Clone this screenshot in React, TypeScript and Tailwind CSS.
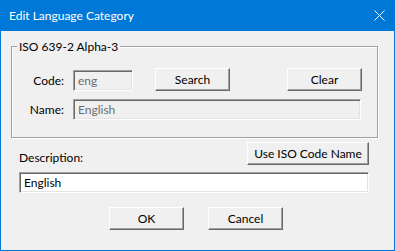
import React from "react";

const font = { fontFamily: 'Lato, "Noto Sans", sans-serif' };

function Btn({ children, className = "" }: { children: React.ReactNode; className?: string }) {
  return (
    <div
      className={
        "h-[23px] flex items-center justify-center pt-[1px] bg-[#f0f0f0] border border-t-white border-l-white border-r-[#696969] border-b-[#696969] shadow-[inset_-1px_-1px_0_#a0a0a0] text-black text-[12px] leading-none " +
        className
      }
    >
      {children}
    </div>
  );
}

function Field({ children, className = "", disabled = false }: { children: React.ReactNode; className?: string; disabled?: boolean }) {
  return (
    <div
      className={
        "h-[21px] flex items-center pl-[4px] pt-[1px] border border-t-[#a0a0a0] border-l-[#a0a0a0] border-r-white border-b-white shadow-[inset_1px_1px_0_#696969,inset_-1px_-1px_0_#e3e3e3] text-[12px] leading-none " +
        (disabled ? "bg-[#f0f0f0] text-[#6d6d6d] " : "bg-white text-black ") +
        className
      }
    >
      {children}
    </div>
  );
}

export default function App() {
  return (
    <div className="w-[395px] h-[251px] bg-[#0078d7] flex flex-col" style={font}>
      <div className="h-[31px] flex items-center justify-between pl-[9px] pr-[10px] text-white text-[12px]">
        <span className="leading-none pt-[1px]">Edit Language Category</span>
        <svg width="11" height="11" viewBox="0 0 11 11" className="block">
          <path d="M0.5 0.5 L10.5 10.5 M10.5 0.5 L0.5 10.5" stroke="white" strokeWidth="1" fill="none" />
        </svg>
      </div>
      <div className="mx-[1px] mb-[1px] flex-1 bg-[#f0f0f0] flex flex-col text-[12px] text-black">
        <div className="relative ml-[10px] mt-[15px] w-[367px] h-[92px] border border-[#a0a0a0] shadow-[inset_1px_1px_0_white,1px_1px_0_white] flex flex-col pt-[21px]">
          <span className="absolute left-[5px] top-[-8px] bg-[#f0f0f0] px-[2px] leading-[16px]">ISO 639-2 Alpha-3</span>
          <div className="flex items-end">
            <div className="w-[52px] h-[21px] pt-[1px] flex items-center justify-end">Code:</div>
            <Field disabled className="ml-[9px] w-[60px]">eng</Field>
            <Btn className="ml-[22px] w-[75px]">Search</Btn>
            <Btn className="ml-[57px] w-[75px]">Clear</Btn>
          </div>
          <div className="flex items-end mt-[8px]">
            <div className="w-[52px] h-[21px] pt-[1px] flex items-center justify-end">Name:</div>
            <Field disabled className="ml-[9px] w-[288px]">English</Field>
          </div>
        </div>
        <div className="flex items-start mt-[4px] ml-[18px]">
          <span className="mt-[8px] leading-[16px]">Description:</span>
          <Btn className="ml-auto mr-[25px] w-[122px]">Use ISO Code Name</Btn>
        </div>
        <Field className="ml-[18px] mt-[6px] w-[350px]">English</Field>
        <div className="flex mt-[14px] ml-[108px] gap-[24px]">
          <Btn className="w-[75px]">OK</Btn>
          <Btn className="w-[75px]">Cancel</Btn>
        </div>
      </div>
    </div>
  );
}
